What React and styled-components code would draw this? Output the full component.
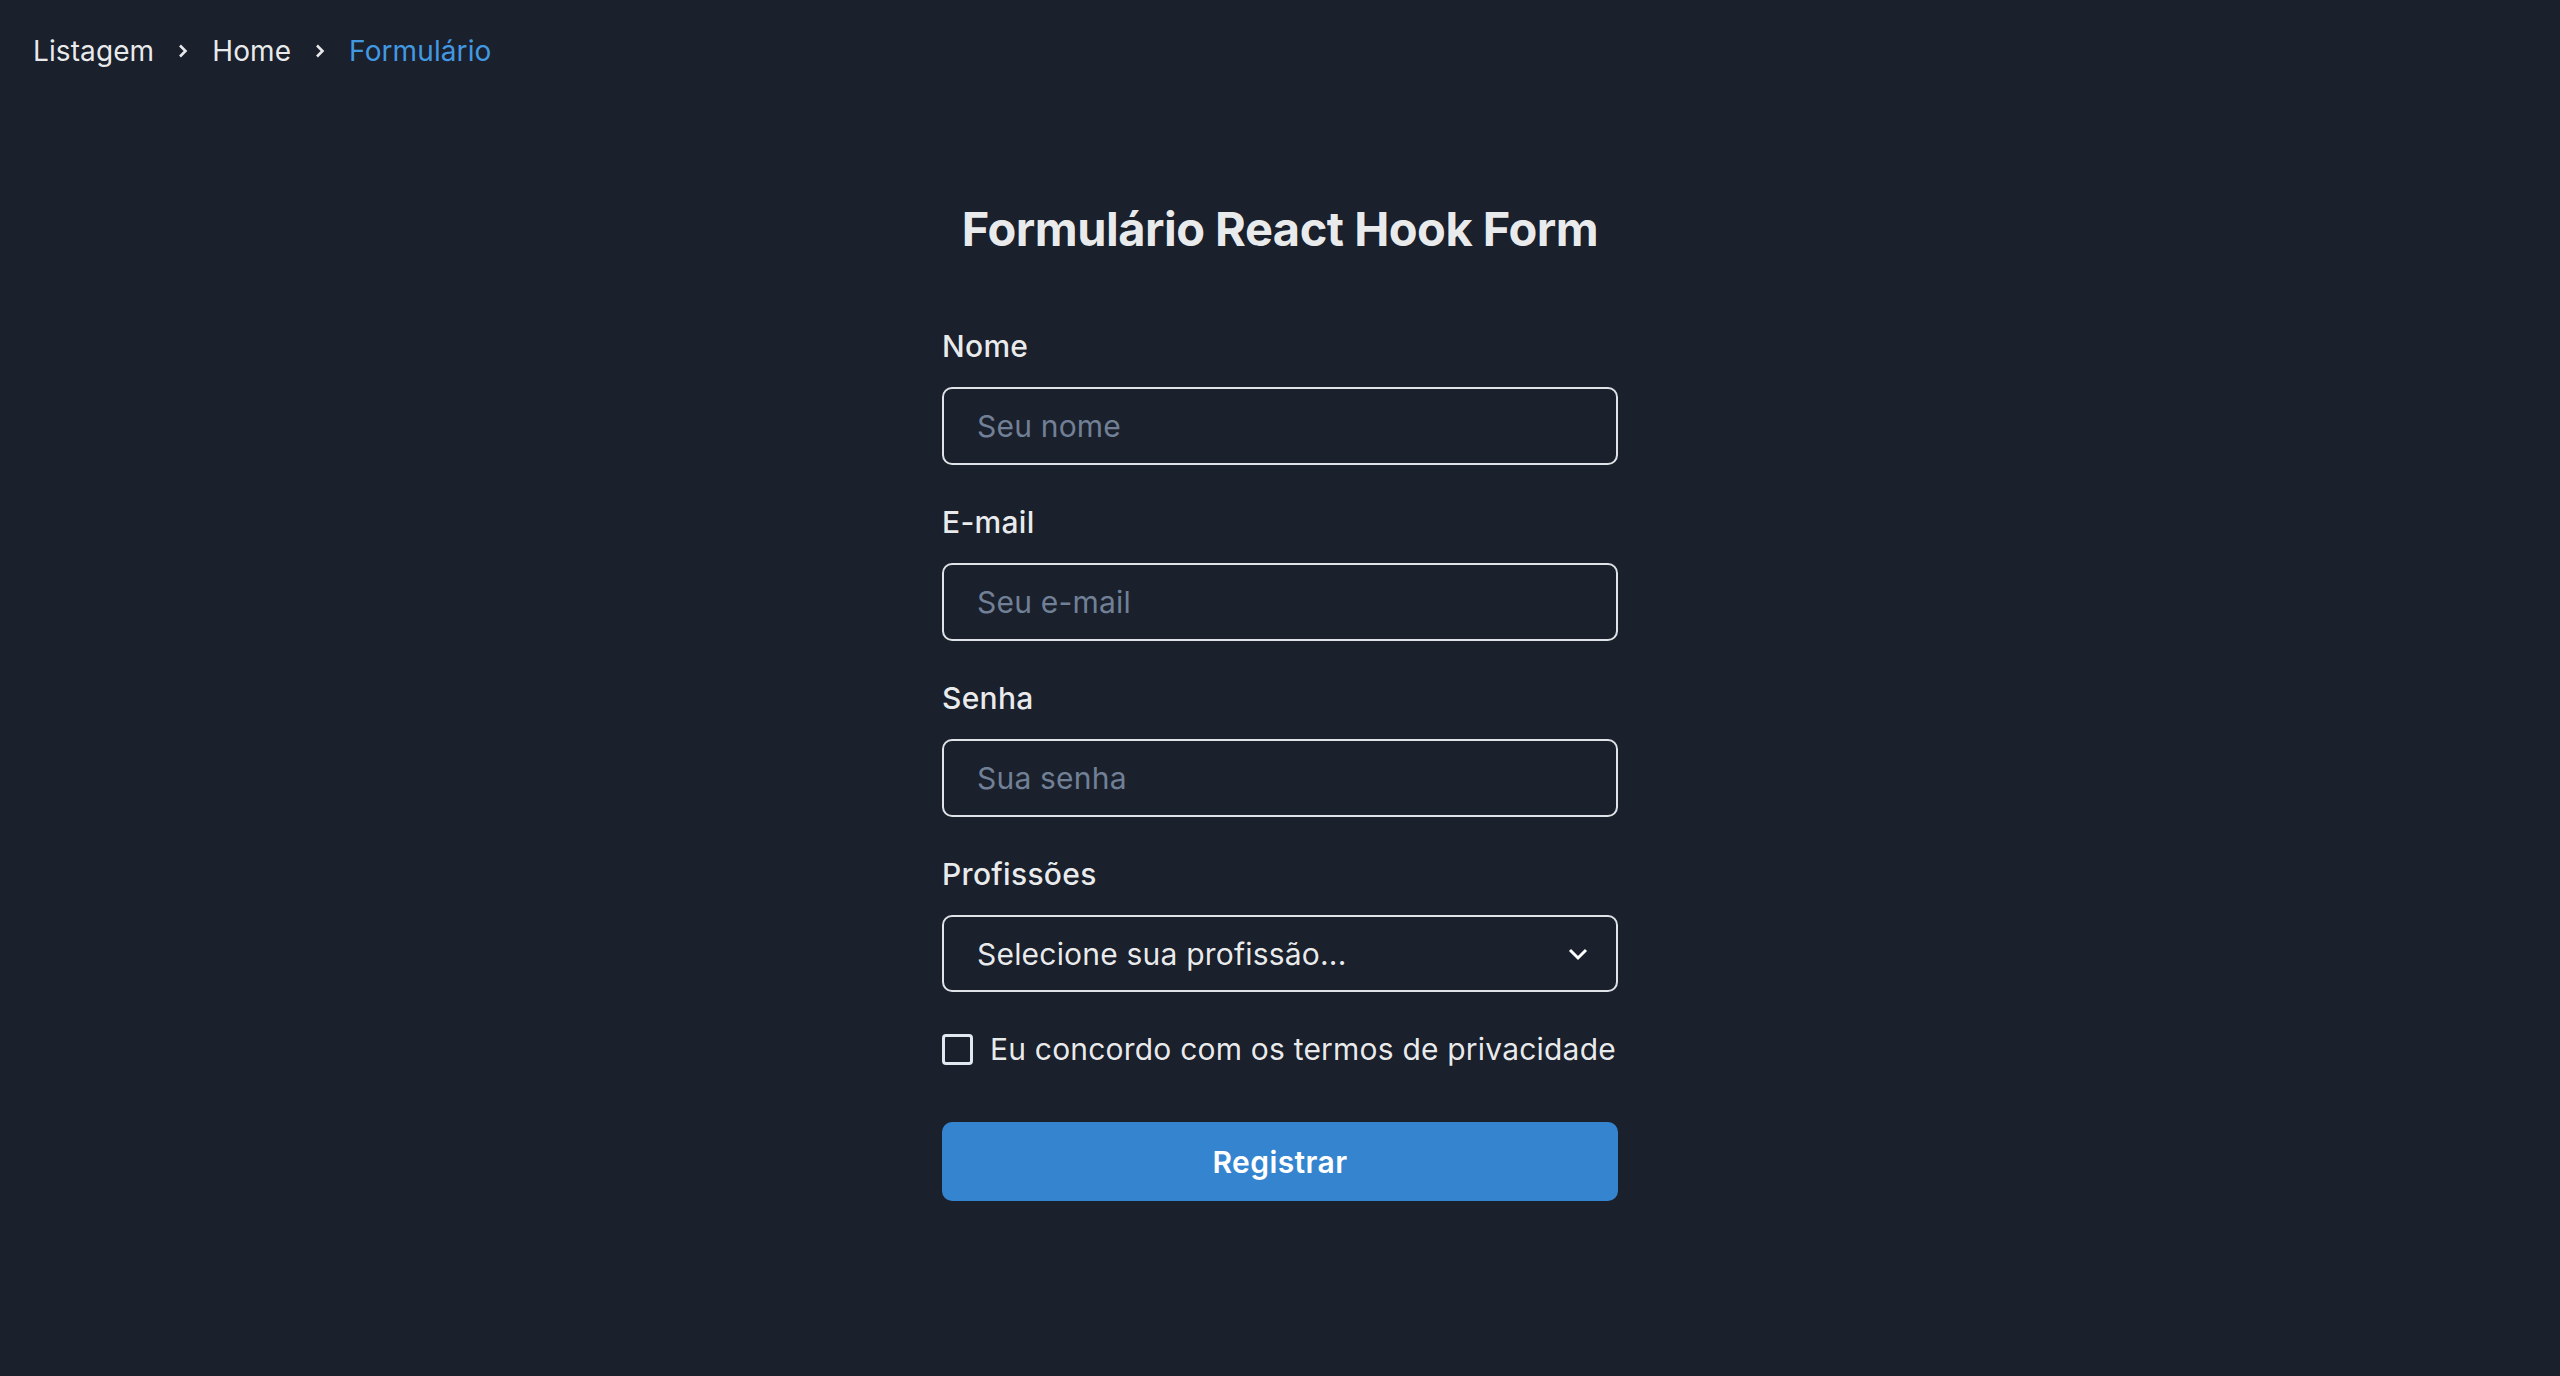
import styled, { createGlobalStyle } from 'styled-components';

const GlobalStyle = createGlobalStyle`
    html, body {
        margin: 0;
        padding: 0;
        background-color: #1a202c;
        color: rgba(255, 255, 255, 0.92);
        font-family: Inter, "Noto Sans", "Liberation Sans", sans-serif;
    }
    #root {
        min-height: 100vh;
    }
`

const Page = styled.div`
    min-height: 100vh;
    display: flex;
    flex-direction: column;
`

const Breadcrumb = styled.nav`
    display: flex;
    align-items: center;
    padding: 31px 33px 0;
    height: 40px;
    font-size: 28px;
    line-height: 40px;
    letter-spacing: 0.1px;
`

const Crumb = styled.span`
    color: ${props => props.$current ? '#4299e1' : 'rgba(255, 255, 255, 0.92)'};
`

const Separator = styled.span`
    display: flex;
    align-items: center;
    margin: 0 23px;
`

const FormWrapper = styled.form`
    width: 676px;
    margin: 130px auto 0;
    display: flex;
    flex-direction: column;
`

const Title = styled.h1`
    margin: 0 0 71px;
    text-align: center;
    font-size: 47px;
    line-height: 56px;
    font-weight: 700;
    letter-spacing: -0.5px;
`

const Field = styled.div`
    display: flex;
    flex-direction: column;
    margin-bottom: 39px;
`

const Label = styled.label`
    font-size: 30px;
    line-height: 36px;
    font-weight: 500;
    letter-spacing: 0.3px;
    margin-bottom: 23px;
`

const Input = styled.input`
    box-sizing: border-box;
    height: 78px;
    width: 100%;
    padding: 0 33px;
    border: 2px solid #dfe2e7;
    border-radius: 10px;
    background: transparent;
    color: rgba(255, 255, 255, 0.92);
    font: inherit;
    font-size: 30px;
    letter-spacing: 0.2px;
    outline: none;

    &::placeholder {
        color: #718096;
    }
`

const SelectBox = styled.div`
    box-sizing: border-box;
    height: 77px;
    display: flex;
    align-items: center;
    justify-content: space-between;
    padding: 0 28px 0 33px;
    border: 2px solid #dfe2e7;
    border-radius: 10px;
    font-size: 30px;
    letter-spacing: 0.2px;
`

const CheckRow = styled.label`
    display: flex;
    align-items: center;
    gap: 17px;
    height: 42px;
    margin-top: -3px;
    font-size: 30px;
    letter-spacing: 0.2px;
`

const CheckBox = styled.span`
    box-sizing: border-box;
    flex-shrink: 0;
    width: 31px;
    height: 31px;
    border: 3px solid #e2e8f0;
    border-radius: 4px;
`

const SubmitButton = styled.button`
    margin-top: 52px;
    height: 79px;
    width: 100%;
    border: none;
    border-radius: 10px;
    background-color: #3584cf;
    color: #ffffff;
    font: inherit;
    font-size: 30px;
    font-weight: 600;
    letter-spacing: 0.4px;
    cursor: pointer;
`

function Chevron() {
    return (
        <svg width="12" height="18" viewBox="0 0 12 18">
            <path d="M3 3.5 L8.5 9 L3 14.5" fill="none" stroke="#e8e8ea" strokeWidth="2.6" />
        </svg>
    )
}

function App() {
    return (
        <>
            <GlobalStyle />
            <Page>
                <Breadcrumb>
                    <Crumb>Listagem</Crumb>
                    <Separator><Chevron /></Separator>
                    <Crumb>Home</Crumb>
                    <Separator><Chevron /></Separator>
                    <Crumb $current>Formulário</Crumb>
                </Breadcrumb>

                <FormWrapper onSubmit={e => e.preventDefault()}>
                    <Title>Formulário React Hook Form</Title>

                    <Field>
                        <Label>Nome</Label>
                        <Input placeholder="Seu nome" />
                    </Field>
                    <Field>
                        <Label>E-mail</Label>
                        <Input placeholder="Seu e-mail" />
                    </Field>
                    <Field>
                        <Label>Senha</Label>
                        <Input type="password" placeholder="Sua senha" />
                    </Field>
                    <Field>
                        <Label>Profissões</Label>
                        <SelectBox>
                            <span>Selecione sua profissão...</span>
                            <svg width="20" height="14" viewBox="0 0 20 14">
                                <path d="M2 3 L10 11 L18 3" fill="none" stroke="#ffffff" strokeWidth="3" />
                            </svg>
                        </SelectBox>
                    </Field>

                    <CheckRow>
                        <CheckBox />
                        Eu concordo com os termos de privacidade
                    </CheckRow>

                    <SubmitButton type="submit">Registrar</SubmitButton>
                </FormWrapper>
            </Page>
        </>
    )
}

export default App
